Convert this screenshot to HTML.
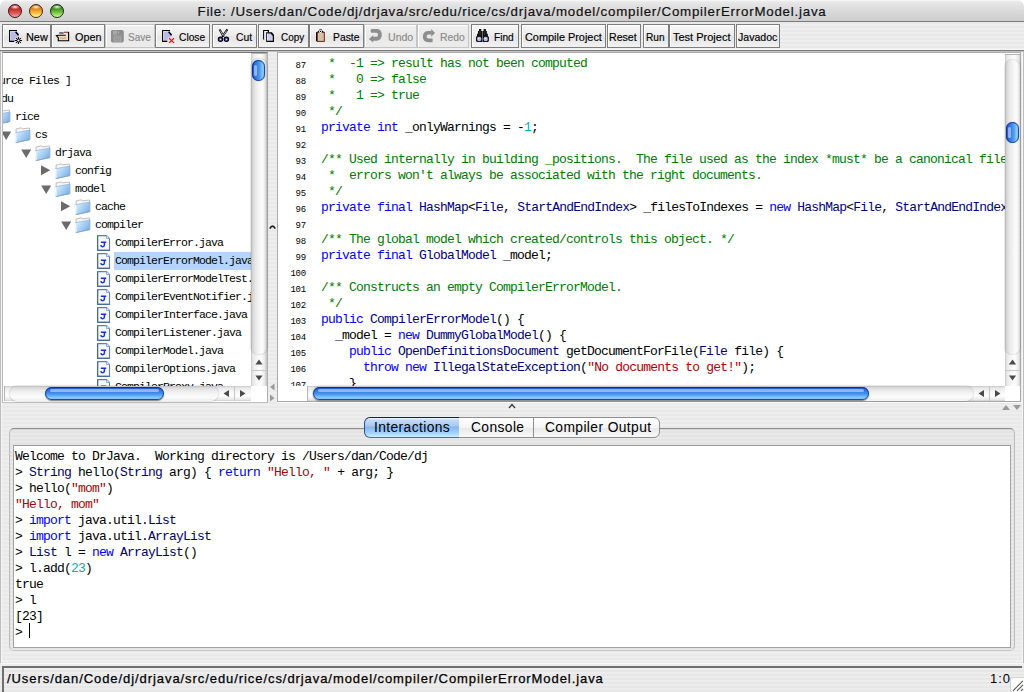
<!DOCTYPE html>
<html><head><meta charset="utf-8">
<style>
*{box-sizing:border-box}
html,body{margin:0;padding:0;background:#fff}
body{width:1024px;height:692px;overflow:hidden;position:relative;font-family:"Liberation Sans",sans-serif}
.abs{position:absolute}
#win{position:absolute;left:0;top:0;width:1024px;height:692px;border-radius:7px 7px 0 0;overflow:hidden;
 background:repeating-linear-gradient(to bottom,#eeeeee 0px,#eeeeee 2px,#e9e9e9 2px,#e9e9e9 4px)}
#title{position:absolute;left:0;top:0;width:1024px;height:22px;background:linear-gradient(to bottom,#f9f9f9 0px,#e8e8e8 2px,#dcdcdc 9px,#cdcdcd 21px);border-bottom:1px solid #7b7b7b}
.light{position:absolute;top:4px;width:14px;height:14px;border-radius:50%;border:1px solid #222}
#ttext{position:absolute;left:0;top:3px;width:1024px;text-align:center;font-size:13.3px;line-height:17px;color:#111;letter-spacing:0.78px;padding-left:0px;-webkit-text-stroke:0.2px #111}
#edgeL{position:absolute;left:0;top:51px;width:1px;height:612px;background:#bdbdbd}
#edgeR{position:absolute;left:1023px;top:51px;width:1px;height:612px;background:#bdbdbd}
.btn{position:absolute;top:24px;height:24px;border:1px solid #7d7d7d;background:linear-gradient(to bottom,#f8f8f8 0%,#ececec 45%,#e4e4e4 55%,#f2f2f2 100%);box-shadow:inset 1px 1px 0 #fff}
.btn.dis{border-color:#c4c4c4;background:linear-gradient(to bottom,#f0f0f0 0%,#e8e8e8 50%,#ececec 100%)}
.tbic{position:absolute;top:26px;width:20px;height:20px}
.tbic svg{display:block}
.btxt{position:absolute;top:30px;font-size:11px;line-height:14px;color:#000;white-space:nowrap;-webkit-text-stroke:0.15px #000}
.distxt{color:#8a8a8a;-webkit-text-stroke:0.15px #8a8a8a}
#tbline{position:absolute;left:0;top:49px;width:1024px;height:3px;background:linear-gradient(to bottom,#f7f7f7 0,#f7f7f7 1px,#7a7a7a 1px,#7a7a7a 2px,#c2c2c2 2px,#c2c2c2 3px)}
.panel{position:absolute;background:#fff;border:1px solid #858585}
.ic{position:absolute}
.tt{position:absolute;font-family:"Liberation Mono",monospace;font-size:11.5px;letter-spacing:-0.9px;line-height:16px;color:#000;white-space:nowrap}
.sel{position:absolute;left:114px;width:140px;height:18px;background:#b5d5ff}
.ln{position:absolute;left:277px;width:29px;text-align:right;font-family:"Liberation Mono",monospace;font-size:9px;letter-spacing:-0.2px;line-height:16px;color:#000;white-space:nowrap}
.cl{position:absolute;left:321px;font-family:"Liberation Mono",monospace;font-size:13px;letter-spacing:-0.8px;line-height:16px;white-space:pre}
.il{position:absolute;left:15px;font-family:"Liberation Mono",monospace;font-size:13px;letter-spacing:-0.8px;line-height:16px;white-space:pre}
.vtrack{position:absolute;background:linear-gradient(to right,#a9a9a9 0px,#cfcfcf 1px,#e6e6e6 4px,#f8f8f8 9px,#fbfbfb 12px,#d9d9d9 15px,#b0b0b0 16px)}
.htrack{position:absolute;background:linear-gradient(to bottom,#b9b9b9 0px,#d3d3d3 1px,#e8e8e8 4px,#f8f8f8 9px,#fbfbfb 12px,#ececec 14px,#fdfdfd 15px)}
.vthumb{position:absolute;border-radius:7px;box-shadow:inset 0 0 0 1px rgba(8,40,140,0.75),0 0 1px rgba(0,0,0,0.55);background:linear-gradient(to right,#1a4cc0 0%,#2f72e0 25%,#4a94ee 55%,#8ad0ff 85%,#5f9ee8 100%)}
.vthumb::after{content:"";position:absolute;left:2px;top:5px;width:3px;bottom:5px;border-radius:2px;background:rgba(220,235,255,0.55)}
.hthumb{position:absolute;border-radius:7px;box-shadow:inset 0 0 0 1px rgba(8,40,140,0.75),0 1px 1px rgba(0,0,0,0.45);background:linear-gradient(to bottom,#1a4cc0 0%,#2f72e0 25%,#4a94ee 55%,#8ad0ff 85%,#5f9ee8 100%)}
.hthumb::after{content:"";position:absolute;top:2px;left:5px;height:3px;right:5px;border-radius:2px;background:rgba(220,235,255,0.55)}
.arrbox{position:absolute;background:linear-gradient(to right,#c9c9c9 0px,#e9e9e9 2px,#f9f9f9 7px,#fdfdfd 10px,#e6e6e6 14px,#c9c9c9 15px)}
.arrboxh{position:absolute;background:linear-gradient(to bottom,#c9c9c9 0px,#e9e9e9 2px,#f9f9f9 7px,#fdfdfd 10px,#e6e6e6 14px,#c9c9c9 15px)}
.tab{position:absolute;top:417px;height:21px;font-size:13.8px;line-height:19px;color:#000;text-align:left;white-space:nowrap;letter-spacing:0.4px}
</style></head><body>
<div id="win">
 <div id="title"></div>
 <div class="light" style="left:8px;border-color:#3d1210;background:radial-gradient(ellipse 42% 20% at 50% 16%,rgba(255,255,255,0.95) 0%,rgba(255,255,255,0) 100%),linear-gradient(to bottom,#9a1a16 0%,#c43030 35%,#dc5a58 68%,#f4a6a2 100%)"></div>
 <div class="light" style="left:29px;border-color:#4a2208;background:radial-gradient(ellipse 42% 20% at 50% 16%,rgba(255,255,255,0.95) 0%,rgba(255,255,255,0) 100%),linear-gradient(to bottom,#a85a0c 0%,#e48c1c 35%,#f6c24a 68%,#ffff96 100%)"></div>
 <div class="light" style="left:50px;border-color:#14300a;background:radial-gradient(ellipse 42% 20% at 50% 16%,rgba(255,255,255,0.95) 0%,rgba(255,255,255,0) 100%),linear-gradient(to bottom,#1e6210 0%,#48981e 35%,#84cc4c 68%,#c6ff96 100%)"></div>
 <div id="ttext">File: /Users/dan/Code/dj/drjava/src/edu/rice/cs/drjava/model/compiler/CompilerErrorModel.java</div>
 <div id="edgeL"></div><div id="edgeR"></div>
 <div class="abs" style="left:1px;top:51px;width:1px;height:612px;background:#f6f6f6"></div><div class="abs" style="left:1022px;top:51px;width:1px;height:612px;background:#f6f6f6"></div>
<div class="btn" style="left:2px;width:49px"></div>
<div class="tbic" style="left:6px"><svg width="20" height="20" viewBox="0 0 20 20"><path d="M4.5 5.5 H10.8 L12.5 8 V11 L9.5 11.5 L8.3 14 V15 H4.5 Z" fill="#babaea"/><path d="M4.4 5.5 V14.8" stroke="#fff" stroke-width="0.9"/><path d="M8.3 15.4 H3.6 V4.5 H11" fill="none" stroke="#000" stroke-width="1.1"/><path d="M9.6 5.8 L12.6 9.3" stroke="#000" stroke-width="1.5"/><g stroke="#000" stroke-width="1.05"><path d="M12.4 10.9 V18.1 M8.8 14.5 H16 M9.9 12 L14.9 17 M14.9 12 L9.9 17"/></g><circle cx="12.4" cy="14.5" r="1.1" fill="#fff"/></svg></div>
<div class="btxt" style="left:25.5px;transform:scaleX(0.99);transform-origin:0 0">New</div>
<div class="btn" style="left:51px;width:54px"></div>
<div class="tbic" style="left:53px"><svg width="20" height="20" viewBox="0 0 20 20"><path d="M6 10 H15.2 V14.3 H6 Z" fill="#efd7b8"/><path d="M7 12.2 Q8 11.4 9 12.2 Q10 13 11 12.2 Q12 11.4 13 12.2" stroke="#b59470" stroke-width="0.8" fill="none"/><path d="M6.2 7 H10.7" stroke="#000" stroke-width="1.1"/><path d="M11 6.3 H15.9" stroke="#8a1e1e" stroke-width="1.1"/><path d="M12.5 7.5 L15 9.5 L15 8 Z" fill="#efd7b8"/><path d="M15.6 6 V14.7 H5.3 V11.8 L3.4 9.7 L5.5 9.2 H12.8" fill="none" stroke="#000" stroke-width="1.15"/></svg></div>
<div class="btxt" style="left:75px;transform:scaleX(0.98);transform-origin:0 0">Open</div>
<div class="btn dis" style="left:105px;width:50px"></div>
<div class="tbic" style="left:107px"><svg width="20" height="20" viewBox="0 0 20 20"><path d="M5 3.9 H15.5 L16.8 5.2 V15.3 L15.5 16.6 H5.2 L4 15.4 V5 Z" fill="#8d8d8d"/><rect x="6" y="4.6" width="4.2" height="4" fill="#a9a9a9"/><rect x="10.2" y="4.6" width="2.6" height="4" fill="#8d8d8d"/><rect x="11" y="5.4" width="1" height="2.2" fill="#b5b5b5"/><rect x="6" y="9.4" width="8.8" height="0.8" fill="#a3a3a3"/><rect x="6.6" y="10.6" width="7.8" height="5" fill="#a7a7a7"/><rect x="7.6" y="11.6" width="5.8" height="3" fill="#9a9a9a"/></svg></div>
<div class="btxt distxt" style="left:128px;transform:scaleX(0.91);transform-origin:0 0">Save</div>
<div class="btn" style="left:155px;width:55px"></div>
<div class="tbic" style="left:159px"><svg width="20" height="20" viewBox="0 0 20 20"><path d="M4.5 5.5 H10.8 L12.5 8 V11 L9.5 11.5 L8.3 14 V15 H4.5 Z" fill="#babaea"/><path d="M4.4 5.5 V14.8" stroke="#fff" stroke-width="0.9"/><path d="M8.3 15.4 H3.6 V4.5 H11" fill="none" stroke="#000" stroke-width="1.1"/><path d="M9.6 5.8 L12.6 9.3" stroke="#000" stroke-width="1.5"/><path d="M10.1 12.2 L15 16.9 M15 12.2 L10.1 16.9" stroke="#f01818" stroke-width="1.3"/></svg></div>
<div class="btxt" style="left:179px;transform:scaleX(0.93);transform-origin:0 0">Close</div>
<div class="btn" style="left:212px;width:45px"></div>
<div class="tbic" style="left:215px"><svg width="20" height="20" viewBox="0 0 20 20"><path d="M4.6 3.4 L8.8 10.8 M12.4 3.4 L7.2 10.8" stroke="#000" stroke-width="2" fill="none"/><path d="M5.2 4.4 L8.2 9.6 M11.8 4.4 L8.3 9.4" stroke="#fff" stroke-width="0.7" fill="none"/><circle cx="5.5" cy="13.3" r="2.2" fill="#5252cc" stroke="#000" stroke-width="1.1"/><circle cx="11.4" cy="13.3" r="2.2" fill="#5252cc" stroke="#000" stroke-width="1.1"/><circle cx="5.5" cy="13.3" r="0.6" fill="#fff"/><circle cx="11.4" cy="13.3" r="0.6" fill="#fff"/></svg></div>
<div class="btxt" style="left:236px;transform:scaleX(0.94);transform-origin:0 0">Cut</div>
<div class="btn" style="left:258px;width:51px"></div>
<div class="tbic" style="left:260px"><svg width="20" height="20" viewBox="0 0 20 20"><path d="M3.7 13.4 V4.5 H8.4 V6.4" fill="none" stroke="#000" stroke-width="1.2"/><rect x="4.4" y="5.2" width="2" height="8" fill="#fff"/><path d="M5.2 6 V12.5" stroke="#c9c9ee" stroke-width="0.8"/><path d="M6.8 6.8 H11.6 L13.4 9 V15.4 H6.8 Z" fill="#cacaf2" stroke="#000" stroke-width="1.2"/><path d="M7.6 7.5 V14.6" stroke="#fff" stroke-width="0.9"/><path d="M11 7.2 L13.6 10" stroke="#000" stroke-width="1.2"/></svg></div>
<div class="btxt" style="left:281px;transform:scaleX(0.9);transform-origin:0 0">Copy</div>
<div class="btn" style="left:309px;width:55px"></div>
<div class="tbic" style="left:312px"><svg width="20" height="20" viewBox="0 0 20 20"><rect x="5.3" y="6.4" width="7" height="9" fill="#d6c2a6" stroke="#6e1f1f" stroke-width="1"/><path d="M4.5 6.2 V15.2" stroke="#000" stroke-width="1"/><path d="M5.3 5.9 L6.8 4.6 H10.2 L11.8 5.9 Z" fill="#000"/><circle cx="8.5" cy="5.4" r="1.5" fill="#fff"/><circle cx="8.5" cy="5.4" r="0.7" fill="#000"/><rect x="7.2" y="2.9" width="2.7" height="1.1" fill="#6d6d6d"/></svg></div>
<div class="btxt" style="left:332.5px;transform:scaleX(0.94);transform-origin:0 0">Paste</div>
<div class="btn dis" style="left:364px;width:53px"></div>
<div class="tbic" style="left:366px"><svg width="20" height="20" viewBox="0 0 20 20"><path d="M5.2 4.95 H10.5 Q13.9 4.95 13.9 8.85 Q13.9 12.75 10.5 12.75 H7" fill="none" stroke="#8e8e8e" stroke-width="3.8"/><path d="M2.9 12.9 L7.2 9.2 L7.2 16.6 Z" fill="#8e8e8e"/><path d="M4 4.8 L6 3.2 V6.4 Z" fill="#8e8e8e"/></svg></div>
<div class="btxt distxt" style="left:388px;transform:scaleX(0.96);transform-origin:0 0">Undo</div>
<div class="btn dis" style="left:417px;width:52px"></div>
<div class="tbic" style="left:419px"><svg width="20" height="20" viewBox="0 0 20 20"><path d="M12.5 6.75 H9.5 Q5.75 6.75 5.75 10.6 Q5.75 14.45 9.5 14.45 H13.6" fill="none" stroke="#8e8e8e" stroke-width="3.7"/><path d="M16 6.9 L12.2 3 L12.2 10.8 Z" fill="#8e8e8e"/></svg></div>
<div class="btxt distxt" style="left:440.4px;transform:scaleX(0.94);transform-origin:0 0">Redo</div>
<div class="btn" style="left:471px;width:48px"></div>
<div class="tbic" style="left:473px"><svg width="20" height="20" viewBox="0 0 20 20"><path d="M6 3 H8.3 V5 H9.3 V15.9 H3.9 L3 15 V11 L4 10 V8 L5 7.5 V5 H6 Z" fill="#111"/><path d="M12.9 3 H10.6 V5 H9.6 V15.9 H15 L15.9 15 V11 L14.9 10 V8 L13.9 7.5 V5 H12.9 Z" fill="#111"/><circle cx="6.2" cy="13" r="2.2" fill="#b9b9f2"/><circle cx="12.7" cy="13" r="2.2" fill="#b9b9f2"/><circle cx="5.6" cy="12.3" r="0.6" fill="#fff"/><circle cx="12.1" cy="12.3" r="0.6" fill="#fff"/><path d="M7 5 V9" stroke="#444" stroke-width="0.8"/><path d="M11.8 5 V9" stroke="#444" stroke-width="0.8"/></svg></div>
<div class="btxt" style="left:494.4px;transform:scaleX(0.92);transform-origin:0 0">Find</div>
<div class="btn" style="left:521px;width:85px"></div>
<div class="btxt" style="left:525px;transform:scaleX(0.99);transform-origin:0 0">Compile Project</div>
<div class="btn" style="left:607px;width:34px"></div>
<div class="btxt" style="left:609.3px;transform:scaleX(0.96);transform-origin:0 0">Reset</div>
<div class="btn" style="left:643px;width:26px"></div>
<div class="btxt" style="left:646.2px;transform:scaleX(0.92);transform-origin:0 0">Run</div>
<div class="btn" style="left:669px;width:66px"></div>
<div class="btxt" style="left:673px;transform:scaleX(1.0);transform-origin:0 0">Test Project</div>
<div class="btn" style="left:736px;width:44px"></div>
<div class="btxt" style="left:737.8px;transform:scaleX(0.96);transform-origin:0 0">Javadoc</div>
 <div id="tbline"></div>

 <!-- left tree panel -->
 <div class="panel" style="left:2px;top:52px;width:266px;height:351px;border-color:#787878 #b0b0b0 #c0c0c0 #b8b8b8"></div>
 <div class="abs" style="left:3px;top:53px;width:248px;height:333px;overflow:hidden">
  <div class="abs" style="left:-3px;top:-53px;width:260px;height:400px">
<div class="tt" style="left:-25px;top:73px">[ Source Files ]</div>
<svg class="ic" style="left:-39px;top:95px" width="11" height="10" viewBox="0 0 11 10"><path d="M0.2 0.5 L10.2 0.5 L5.2 9 Z" fill="#6b6b6b"/></svg>
<svg class="ic" style="left:-26px;top:91px" width="17" height="17" viewBox="0 0 17 17">
<defs><linearGradient id="fgm26_91" x1="0" y1="0" x2="1" y2="0.6"><stop offset="0" stop-color="#eaf6ff"/><stop offset="0.35" stop-color="#bfe0fa"/><stop offset="1" stop-color="#7fb3e6"/></linearGradient></defs>
<path d="M2 2 L7 0.8 L8.5 1.8 L15.5 1 L16 12.5 L2.5 14.5 Z" fill="#f6f6f6" stroke="#a8a8a8" stroke-width="0.7"/>
<path d="M1.2 5.8 L16 3 L15.6 12.6 L1.8 15.6 Z" fill="url(#fgm26_91)" stroke="#8aa9c9" stroke-width="0.6"/>
<path d="M1.5 6 L2 15.3" stroke="#ffffff" stroke-width="1.2"/>
<path d="M2.2 15.6 L15.6 12.6" stroke="#7d9fc4" stroke-width="0.8"/>
</svg>
<div class="tt" style="left:-5px;top:91px">edu</div>
<svg class="ic" style="left:-19px;top:113px" width="11" height="10" viewBox="0 0 11 10"><path d="M0.2 0.5 L10.2 0.5 L5.2 9 Z" fill="#6b6b6b"/></svg>
<svg class="ic" style="left:-6px;top:109px" width="17" height="17" viewBox="0 0 17 17">
<defs><linearGradient id="fgm6_109" x1="0" y1="0" x2="1" y2="0.6"><stop offset="0" stop-color="#eaf6ff"/><stop offset="0.35" stop-color="#bfe0fa"/><stop offset="1" stop-color="#7fb3e6"/></linearGradient></defs>
<path d="M2 2 L7 0.8 L8.5 1.8 L15.5 1 L16 12.5 L2.5 14.5 Z" fill="#f6f6f6" stroke="#a8a8a8" stroke-width="0.7"/>
<path d="M1.2 5.8 L16 3 L15.6 12.6 L1.8 15.6 Z" fill="url(#fgm6_109)" stroke="#8aa9c9" stroke-width="0.6"/>
<path d="M1.5 6 L2 15.3" stroke="#ffffff" stroke-width="1.2"/>
<path d="M2.2 15.6 L15.6 12.6" stroke="#7d9fc4" stroke-width="0.8"/>
</svg>
<div class="tt" style="left:15px;top:109px">rice</div>
<svg class="ic" style="left:1px;top:131px" width="11" height="10" viewBox="0 0 11 10"><path d="M0.2 0.5 L10.2 0.5 L5.2 9 Z" fill="#6b6b6b"/></svg>
<svg class="ic" style="left:14px;top:127px" width="17" height="17" viewBox="0 0 17 17">
<defs><linearGradient id="fg14_127" x1="0" y1="0" x2="1" y2="0.6"><stop offset="0" stop-color="#eaf6ff"/><stop offset="0.35" stop-color="#bfe0fa"/><stop offset="1" stop-color="#7fb3e6"/></linearGradient></defs>
<path d="M2 2 L7 0.8 L8.5 1.8 L15.5 1 L16 12.5 L2.5 14.5 Z" fill="#f6f6f6" stroke="#a8a8a8" stroke-width="0.7"/>
<path d="M1.2 5.8 L16 3 L15.6 12.6 L1.8 15.6 Z" fill="url(#fg14_127)" stroke="#8aa9c9" stroke-width="0.6"/>
<path d="M1.5 6 L2 15.3" stroke="#ffffff" stroke-width="1.2"/>
<path d="M2.2 15.6 L15.6 12.6" stroke="#7d9fc4" stroke-width="0.8"/>
</svg>
<div class="tt" style="left:35px;top:127px">cs</div>
<svg class="ic" style="left:21px;top:149px" width="11" height="10" viewBox="0 0 11 10"><path d="M0.2 0.5 L10.2 0.5 L5.2 9 Z" fill="#6b6b6b"/></svg>
<svg class="ic" style="left:34px;top:145px" width="17" height="17" viewBox="0 0 17 17">
<defs><linearGradient id="fg34_145" x1="0" y1="0" x2="1" y2="0.6"><stop offset="0" stop-color="#eaf6ff"/><stop offset="0.35" stop-color="#bfe0fa"/><stop offset="1" stop-color="#7fb3e6"/></linearGradient></defs>
<path d="M2 2 L7 0.8 L8.5 1.8 L15.5 1 L16 12.5 L2.5 14.5 Z" fill="#f6f6f6" stroke="#a8a8a8" stroke-width="0.7"/>
<path d="M1.2 5.8 L16 3 L15.6 12.6 L1.8 15.6 Z" fill="url(#fg34_145)" stroke="#8aa9c9" stroke-width="0.6"/>
<path d="M1.5 6 L2 15.3" stroke="#ffffff" stroke-width="1.2"/>
<path d="M2.2 15.6 L15.6 12.6" stroke="#7d9fc4" stroke-width="0.8"/>
</svg>
<div class="tt" style="left:55px;top:145px">drjava</div>
<svg class="ic" style="left:41px;top:165px" width="10" height="11" viewBox="0 0 10 11"><path d="M0 0.3 L9.3 5.3 L0 10.3 Z" fill="#6b6b6b"/></svg>
<svg class="ic" style="left:54px;top:163px" width="17" height="17" viewBox="0 0 17 17">
<defs><linearGradient id="fg54_163" x1="0" y1="0" x2="1" y2="0.6"><stop offset="0" stop-color="#eaf6ff"/><stop offset="0.35" stop-color="#bfe0fa"/><stop offset="1" stop-color="#7fb3e6"/></linearGradient></defs>
<path d="M2 2 L7 0.8 L8.5 1.8 L15.5 1 L16 12.5 L2.5 14.5 Z" fill="#f6f6f6" stroke="#a8a8a8" stroke-width="0.7"/>
<path d="M1.2 5.8 L16 3 L15.6 12.6 L1.8 15.6 Z" fill="url(#fg54_163)" stroke="#8aa9c9" stroke-width="0.6"/>
<path d="M1.5 6 L2 15.3" stroke="#ffffff" stroke-width="1.2"/>
<path d="M2.2 15.6 L15.6 12.6" stroke="#7d9fc4" stroke-width="0.8"/>
</svg>
<div class="tt" style="left:75px;top:163px">config</div>
<svg class="ic" style="left:41px;top:185px" width="11" height="10" viewBox="0 0 11 10"><path d="M0.2 0.5 L10.2 0.5 L5.2 9 Z" fill="#6b6b6b"/></svg>
<svg class="ic" style="left:54px;top:181px" width="17" height="17" viewBox="0 0 17 17">
<defs><linearGradient id="fg54_181" x1="0" y1="0" x2="1" y2="0.6"><stop offset="0" stop-color="#eaf6ff"/><stop offset="0.35" stop-color="#bfe0fa"/><stop offset="1" stop-color="#7fb3e6"/></linearGradient></defs>
<path d="M2 2 L7 0.8 L8.5 1.8 L15.5 1 L16 12.5 L2.5 14.5 Z" fill="#f6f6f6" stroke="#a8a8a8" stroke-width="0.7"/>
<path d="M1.2 5.8 L16 3 L15.6 12.6 L1.8 15.6 Z" fill="url(#fg54_181)" stroke="#8aa9c9" stroke-width="0.6"/>
<path d="M1.5 6 L2 15.3" stroke="#ffffff" stroke-width="1.2"/>
<path d="M2.2 15.6 L15.6 12.6" stroke="#7d9fc4" stroke-width="0.8"/>
</svg>
<div class="tt" style="left:75px;top:181px">model</div>
<svg class="ic" style="left:61px;top:201px" width="10" height="11" viewBox="0 0 10 11"><path d="M0 0.3 L9.3 5.3 L0 10.3 Z" fill="#6b6b6b"/></svg>
<svg class="ic" style="left:74px;top:199px" width="17" height="17" viewBox="0 0 17 17">
<defs><linearGradient id="fg74_199" x1="0" y1="0" x2="1" y2="0.6"><stop offset="0" stop-color="#eaf6ff"/><stop offset="0.35" stop-color="#bfe0fa"/><stop offset="1" stop-color="#7fb3e6"/></linearGradient></defs>
<path d="M2 2 L7 0.8 L8.5 1.8 L15.5 1 L16 12.5 L2.5 14.5 Z" fill="#f6f6f6" stroke="#a8a8a8" stroke-width="0.7"/>
<path d="M1.2 5.8 L16 3 L15.6 12.6 L1.8 15.6 Z" fill="url(#fg74_199)" stroke="#8aa9c9" stroke-width="0.6"/>
<path d="M1.5 6 L2 15.3" stroke="#ffffff" stroke-width="1.2"/>
<path d="M2.2 15.6 L15.6 12.6" stroke="#7d9fc4" stroke-width="0.8"/>
</svg>
<div class="tt" style="left:95px;top:199px">cache</div>
<svg class="ic" style="left:61px;top:221px" width="11" height="10" viewBox="0 0 11 10"><path d="M0.2 0.5 L10.2 0.5 L5.2 9 Z" fill="#6b6b6b"/></svg>
<svg class="ic" style="left:74px;top:217px" width="17" height="17" viewBox="0 0 17 17">
<defs><linearGradient id="fg74_217" x1="0" y1="0" x2="1" y2="0.6"><stop offset="0" stop-color="#eaf6ff"/><stop offset="0.35" stop-color="#bfe0fa"/><stop offset="1" stop-color="#7fb3e6"/></linearGradient></defs>
<path d="M2 2 L7 0.8 L8.5 1.8 L15.5 1 L16 12.5 L2.5 14.5 Z" fill="#f6f6f6" stroke="#a8a8a8" stroke-width="0.7"/>
<path d="M1.2 5.8 L16 3 L15.6 12.6 L1.8 15.6 Z" fill="url(#fg74_217)" stroke="#8aa9c9" stroke-width="0.6"/>
<path d="M1.5 6 L2 15.3" stroke="#ffffff" stroke-width="1.2"/>
<path d="M2.2 15.6 L15.6 12.6" stroke="#7d9fc4" stroke-width="0.8"/>
</svg>
<div class="tt" style="left:95px;top:217px">compiler</div>
<svg class="ic" style="left:97px;top:235px" width="14" height="16" viewBox="0 0 14 16">
<path d="M0.6 0.6 H9.5 L12.5 3.6 V15.4 H0.6 Z" fill="#f7f9fc" stroke="#5f7fa8" stroke-width="1.1"/><path d="M1 15.4 H12.5 M0.6 1 V15.4" stroke="#4a6a98" stroke-width="1.2"/>
<path d="M9.5 0.5 V3.5 H12.5" fill="#dfe8f3" stroke="#7f9fc5" stroke-width="0.8"/>
<path d="M3.9 7.2 H9.2 M7.4 7.2 V10.1 Q7.4 11.7 5.6 11.7 Q3.9 11.7 3.9 10.1" fill="none" stroke="#1a2ee0" stroke-width="1.45"/>
</svg>
<div class="tt" style="left:115px;top:235px">CompilerError.java</div>
<div class="sel" style="top:252px"></div>
<svg class="ic" style="left:97px;top:253px" width="14" height="16" viewBox="0 0 14 16">
<path d="M0.6 0.6 H9.5 L12.5 3.6 V15.4 H0.6 Z" fill="#f7f9fc" stroke="#5f7fa8" stroke-width="1.1"/><path d="M1 15.4 H12.5 M0.6 1 V15.4" stroke="#4a6a98" stroke-width="1.2"/>
<path d="M9.5 0.5 V3.5 H12.5" fill="#dfe8f3" stroke="#7f9fc5" stroke-width="0.8"/>
<path d="M3.9 7.2 H9.2 M7.4 7.2 V10.1 Q7.4 11.7 5.6 11.7 Q3.9 11.7 3.9 10.1" fill="none" stroke="#1a2ee0" stroke-width="1.45"/>
</svg>
<div class="tt" style="left:115px;top:253px">CompilerErrorModel.java</div>
<svg class="ic" style="left:97px;top:271px" width="14" height="16" viewBox="0 0 14 16">
<path d="M0.6 0.6 H9.5 L12.5 3.6 V15.4 H0.6 Z" fill="#f7f9fc" stroke="#5f7fa8" stroke-width="1.1"/><path d="M1 15.4 H12.5 M0.6 1 V15.4" stroke="#4a6a98" stroke-width="1.2"/>
<path d="M9.5 0.5 V3.5 H12.5" fill="#dfe8f3" stroke="#7f9fc5" stroke-width="0.8"/>
<path d="M3.9 7.2 H9.2 M7.4 7.2 V10.1 Q7.4 11.7 5.6 11.7 Q3.9 11.7 3.9 10.1" fill="none" stroke="#1a2ee0" stroke-width="1.45"/>
</svg>
<div class="tt" style="left:115px;top:271px">CompilerErrorModelTest.java</div>
<svg class="ic" style="left:97px;top:289px" width="14" height="16" viewBox="0 0 14 16">
<path d="M0.6 0.6 H9.5 L12.5 3.6 V15.4 H0.6 Z" fill="#f7f9fc" stroke="#5f7fa8" stroke-width="1.1"/><path d="M1 15.4 H12.5 M0.6 1 V15.4" stroke="#4a6a98" stroke-width="1.2"/>
<path d="M9.5 0.5 V3.5 H12.5" fill="#dfe8f3" stroke="#7f9fc5" stroke-width="0.8"/>
<path d="M3.9 7.2 H9.2 M7.4 7.2 V10.1 Q7.4 11.7 5.6 11.7 Q3.9 11.7 3.9 10.1" fill="none" stroke="#1a2ee0" stroke-width="1.45"/>
</svg>
<div class="tt" style="left:115px;top:289px">CompilerEventNotifier.java</div>
<svg class="ic" style="left:97px;top:307px" width="14" height="16" viewBox="0 0 14 16">
<path d="M0.6 0.6 H9.5 L12.5 3.6 V15.4 H0.6 Z" fill="#f7f9fc" stroke="#5f7fa8" stroke-width="1.1"/><path d="M1 15.4 H12.5 M0.6 1 V15.4" stroke="#4a6a98" stroke-width="1.2"/>
<path d="M9.5 0.5 V3.5 H12.5" fill="#dfe8f3" stroke="#7f9fc5" stroke-width="0.8"/>
<path d="M3.9 7.2 H9.2 M7.4 7.2 V10.1 Q7.4 11.7 5.6 11.7 Q3.9 11.7 3.9 10.1" fill="none" stroke="#1a2ee0" stroke-width="1.45"/>
</svg>
<div class="tt" style="left:115px;top:307px">CompilerInterface.java</div>
<svg class="ic" style="left:97px;top:325px" width="14" height="16" viewBox="0 0 14 16">
<path d="M0.6 0.6 H9.5 L12.5 3.6 V15.4 H0.6 Z" fill="#f7f9fc" stroke="#5f7fa8" stroke-width="1.1"/><path d="M1 15.4 H12.5 M0.6 1 V15.4" stroke="#4a6a98" stroke-width="1.2"/>
<path d="M9.5 0.5 V3.5 H12.5" fill="#dfe8f3" stroke="#7f9fc5" stroke-width="0.8"/>
<path d="M3.9 7.2 H9.2 M7.4 7.2 V10.1 Q7.4 11.7 5.6 11.7 Q3.9 11.7 3.9 10.1" fill="none" stroke="#1a2ee0" stroke-width="1.45"/>
</svg>
<div class="tt" style="left:115px;top:325px">CompilerListener.java</div>
<svg class="ic" style="left:97px;top:343px" width="14" height="16" viewBox="0 0 14 16">
<path d="M0.6 0.6 H9.5 L12.5 3.6 V15.4 H0.6 Z" fill="#f7f9fc" stroke="#5f7fa8" stroke-width="1.1"/><path d="M1 15.4 H12.5 M0.6 1 V15.4" stroke="#4a6a98" stroke-width="1.2"/>
<path d="M9.5 0.5 V3.5 H12.5" fill="#dfe8f3" stroke="#7f9fc5" stroke-width="0.8"/>
<path d="M3.9 7.2 H9.2 M7.4 7.2 V10.1 Q7.4 11.7 5.6 11.7 Q3.9 11.7 3.9 10.1" fill="none" stroke="#1a2ee0" stroke-width="1.45"/>
</svg>
<div class="tt" style="left:115px;top:343px">CompilerModel.java</div>
<svg class="ic" style="left:97px;top:361px" width="14" height="16" viewBox="0 0 14 16">
<path d="M0.6 0.6 H9.5 L12.5 3.6 V15.4 H0.6 Z" fill="#f7f9fc" stroke="#5f7fa8" stroke-width="1.1"/><path d="M1 15.4 H12.5 M0.6 1 V15.4" stroke="#4a6a98" stroke-width="1.2"/>
<path d="M9.5 0.5 V3.5 H12.5" fill="#dfe8f3" stroke="#7f9fc5" stroke-width="0.8"/>
<path d="M3.9 7.2 H9.2 M7.4 7.2 V10.1 Q7.4 11.7 5.6 11.7 Q3.9 11.7 3.9 10.1" fill="none" stroke="#1a2ee0" stroke-width="1.45"/>
</svg>
<div class="tt" style="left:115px;top:361px">CompilerOptions.java</div>
<svg class="ic" style="left:97px;top:379px" width="14" height="16" viewBox="0 0 14 16">
<path d="M0.6 0.6 H9.5 L12.5 3.6 V15.4 H0.6 Z" fill="#f7f9fc" stroke="#5f7fa8" stroke-width="1.1"/><path d="M1 15.4 H12.5 M0.6 1 V15.4" stroke="#4a6a98" stroke-width="1.2"/>
<path d="M9.5 0.5 V3.5 H12.5" fill="#dfe8f3" stroke="#7f9fc5" stroke-width="0.8"/>
<path d="M3.9 7.2 H9.2 M7.4 7.2 V10.1 Q7.4 11.7 5.6 11.7 Q3.9 11.7 3.9 10.1" fill="none" stroke="#1a2ee0" stroke-width="1.45"/>
</svg>
<div class="tt" style="left:115px;top:379px">CompilerProxy.java</div>
  </div>
 </div>
<div class="arrbox" style="left:251px;top:53px;width:16px;height:333px;border-top:1px solid #b4b4b4"></div>
<div class="vtrack" style="left:251px;top:59px;width:16px;height:295px;border-radius:7px;box-shadow:0 0 1.5px rgba(0,0,0,0.45)"></div>
<div class="vthumb" style="left:252px;top:60px;width:13px;height:21px"></div>
<div class="abs" style="left:251px;top:370px;width:16px;height:1px;background:#c6c6c6"></div>
<svg class="ic" style="left:251px;top:354px" width="16" height="32"><path d="M4.4 10.5 L11.6 10.5 L8.0 5.5 Z M4.4 21.5 L11.6 21.5 L8.0 26.5 Z" fill="#4a4a4a"/></svg>
<div class="arrboxh" style="left:4px;top:386px;width:247px;height:15px;border-left:1px solid #b4b4b4"></div>
<div class="htrack" style="left:10px;top:386px;width:208px;height:15px;border-radius:7px;box-shadow:0 0 1.5px rgba(0,0,0,0.45)"></div>
<div class="hthumb" style="left:45px;top:387px;width:119px;height:13px"></div>
<div class="abs" style="left:234px;top:386px;width:1px;height:15px;background:#c6c6c6"></div>
<svg class="ic" style="left:218px;top:386px" width="33" height="15"><path d="M11 3.9 L11 11.1 L5.5 7.5 Z M22 3.9 L22 11.1 L27.5 7.5 Z" fill="#4a4a4a"/></svg>
 <svg class="ic" style="left:269px;top:383px" width="7" height="20"><path d="M5.5 0.5 L1 4 L5.5 7.5 Z M1 11.5 L5.5 15 L1 18.5 Z" fill="#9a9a9a"/></svg>

 <!-- code panel -->
 <div class="panel" style="left:277px;top:52px;width:744px;height:350px;border-color:#b0b0b0 #aaaaaa #a8a8a8 #aaaaaa"></div>
 <div class="abs" style="left:278px;top:53px;width:727px;height:333px;overflow:hidden">
  <div class="abs" style="left:-278px;top:-53px;width:1100px;height:400px">
<div class="ln" style="top:58px">87</div>
<div class="cl" style="top:56px"><span style="color:#007c00"> *  -1 =&gt; result has not been computed</span></div>
<div class="ln" style="top:74px">88</div>
<div class="cl" style="top:72px"><span style="color:#007c00"> *   0 =&gt; false</span></div>
<div class="ln" style="top:90px">89</div>
<div class="cl" style="top:88px"><span style="color:#007c00"> *   1 =&gt; true</span></div>
<div class="ln" style="top:106px">90</div>
<div class="cl" style="top:104px"><span style="color:#007c00"> */</span></div>
<div class="ln" style="top:122px">91</div>
<div class="cl" style="top:120px"><span style="color:#0000ff">private</span><span style="color:#000000"> </span><span style="color:#0000ff">int</span><span style="color:#000000"> _onlyWarnings = -</span><span style="color:#00b2b2">1</span><span style="color:#000000">;</span></div>
<div class="ln" style="top:138px">92</div>
<div class="cl" style="top:136px"></div>
<div class="ln" style="top:154px">93</div>
<div class="cl" style="top:152px"><span style="color:#007c00">/** Used internally in building _positions.  The file used as the index *must* be a canonical file</span></div>
<div class="ln" style="top:170px">94</div>
<div class="cl" style="top:168px"><span style="color:#007c00"> *  errors won&#x27;t always be associated with the right documents.</span></div>
<div class="ln" style="top:186px">95</div>
<div class="cl" style="top:184px"><span style="color:#007c00"> */</span></div>
<div class="ln" style="top:202px">96</div>
<div class="cl" style="top:200px"><span style="color:#0000ff">private</span><span style="color:#000000"> </span><span style="color:#0000ff">final</span><span style="color:#000000"> </span><span style="color:#00007c">HashMap</span><span style="color:#000000">&lt;</span><span style="color:#00007c">File</span><span style="color:#000000">, </span><span style="color:#00007c">StartAndEndIndex</span><span style="color:#000000">&gt; _filesToIndexes = </span><span style="color:#0000ff">new</span><span style="color:#000000"> </span><span style="color:#00007c">HashMap</span><span style="color:#000000">&lt;</span><span style="color:#00007c">File</span><span style="color:#000000">, </span><span style="color:#00007c">StartAndEndIndex</span><span style="color:#000000">&gt;();</span></div>
<div class="ln" style="top:218px">97</div>
<div class="cl" style="top:216px"></div>
<div class="ln" style="top:234px">98</div>
<div class="cl" style="top:232px"><span style="color:#007c00">/** The global model which created/controls this object. */</span></div>
<div class="ln" style="top:250px">99</div>
<div class="cl" style="top:248px"><span style="color:#0000ff">private</span><span style="color:#000000"> </span><span style="color:#0000ff">final</span><span style="color:#000000"> </span><span style="color:#00007c">GlobalModel</span><span style="color:#000000"> _model;</span></div>
<div class="ln" style="top:266px">100</div>
<div class="cl" style="top:264px"></div>
<div class="ln" style="top:282px">101</div>
<div class="cl" style="top:280px"><span style="color:#007c00">/** Constructs an empty CompilerErrorModel.</span></div>
<div class="ln" style="top:298px">102</div>
<div class="cl" style="top:296px"><span style="color:#007c00"> */</span></div>
<div class="ln" style="top:314px">103</div>
<div class="cl" style="top:312px"><span style="color:#0000ff">public</span><span style="color:#000000"> </span><span style="color:#00007c">CompilerErrorModel</span><span style="color:#000000">() {</span></div>
<div class="ln" style="top:330px">104</div>
<div class="cl" style="top:328px"><span style="color:#000000">  _model = </span><span style="color:#0000ff">new</span><span style="color:#000000"> </span><span style="color:#00007c">DummyGlobalModel</span><span style="color:#000000">() {</span></div>
<div class="ln" style="top:346px">105</div>
<div class="cl" style="top:344px"><span style="color:#000000">    </span><span style="color:#0000ff">public</span><span style="color:#000000"> </span><span style="color:#00007c">OpenDefinitionsDocument</span><span style="color:#000000"> getDocumentForFile(</span><span style="color:#00007c">File</span><span style="color:#000000"> file) {</span></div>
<div class="ln" style="top:362px">106</div>
<div class="cl" style="top:360px"><span style="color:#000000">      </span><span style="color:#0000ff">throw</span><span style="color:#000000"> </span><span style="color:#0000ff">new</span><span style="color:#000000"> </span><span style="color:#00007c">IllegalStateException</span><span style="color:#000000">(</span><span style="color:#b20000">&quot;No documents to get!&quot;</span><span style="color:#000000">);</span></div>
<div class="ln" style="top:378px">107</div>
<div class="cl" style="top:376px"><span style="color:#000000">    }</span></div>
  </div>
 </div>
<div class="arrbox" style="left:1005px;top:54px;width:15px;height:332px;border-top:1px solid #b4b4b4"></div>
<div class="vtrack" style="left:1005px;top:60px;width:15px;height:294px;border-radius:7px;box-shadow:0 0 1.5px rgba(0,0,0,0.45)"></div>
<div class="vthumb" style="left:1006px;top:122px;width:13px;height:21px"></div>
<div class="abs" style="left:1005px;top:370px;width:15px;height:1px;background:#c6c6c6"></div>
<svg class="ic" style="left:1005px;top:354px" width="15" height="32"><path d="M3.9 10.5 L11.1 10.5 L7.5 5.5 Z M3.9 21.5 L11.1 21.5 L7.5 26.5 Z" fill="#4a4a4a"/></svg>
<div class="arrboxh" style="left:307px;top:386px;width:698px;height:15px;border-left:1px solid #b4b4b4"></div>
<div class="htrack" style="left:313px;top:386px;width:660px;height:15px;border-radius:7px;box-shadow:0 0 1.5px rgba(0,0,0,0.45)"></div>
<div class="hthumb" style="left:313px;top:387px;width:556px;height:13px"></div>
<div class="abs" style="left:989px;top:386px;width:1px;height:15px;background:#c6c6c6"></div>
<svg class="ic" style="left:973px;top:386px" width="32" height="15"><path d="M11 3.9 L11 11.1 L5.5 7.5 Z M22 3.9 L22 11.1 L27.5 7.5 Z" fill="#4a4a4a"/></svg>

 <div class="abs" style="left:277px;top:402px;width:745px;height:1px;background:#fbfbfb"></div>
 <!-- splitter arrows -->
 <svg class="ic" style="left:269px;top:224px" width="7" height="6"><path d="M0.8 4.6 Q3.5 -0.2 6.2 4.6" fill="none" stroke="#222" stroke-width="1.7"/></svg>
 <svg class="ic" style="left:508px;top:403px" width="8" height="6"><path d="M1 5 L4 1.5 L7 5" fill="none" stroke="#333" stroke-width="1.2"/></svg>
 <svg class="ic" style="left:1001px;top:404px" width="22" height="7"><path d="M1 6 L5 1 L9 6 Z M12 1 L20 1 L16 6 Z" fill="#9a9a9a"/></svg>

 <!-- tab pane -->
 <div class="abs" style="left:9px;top:428px;width:1006px;height:223px;border:1px solid #bcbcbc;border-top-color:#8e8e8e;border-bottom-color:#c8c8c8;box-shadow:inset 0 1px 1px rgba(0,0,0,0.08);border-radius:5px;background:repeating-linear-gradient(to bottom,#e9e9e9 0px,#e9e9e9 2px,#e3e3e3 2px,#e3e3e3 4px)"></div>
 <div class="abs" style="left:13px;top:445px;width:998px;height:203px;background:#fff;border:1px solid #a3a3a3;border-top-color:#9a9a9a"></div>
 <div class="tab" style="left:364px;width:96px;border:1px solid #2a4cae;border-top-color:#0e168a;border-bottom-color:#5a6a88;border-radius:6px 0 0 6px;background:linear-gradient(to bottom,#f4f8ff 0px,#c4dbf6 2px,#a8c8f0 8px,#86b6ec 9px,#9ccdfa 14px,#c6efff 19px)"><span style="position:absolute;left:9px">Interactions</span></div>
 <div class="tab" style="left:459px;width:75px;border:1px solid #8e8e8e;border-left:none;background:linear-gradient(to bottom,#ffffff 0%,#f4f4f4 50%,#e9e9e9 55%,#f9f9f9 100%)"><span style="position:absolute;left:12px">Console</span></div>
 <div class="tab" style="left:533px;width:127px;border:1px solid #8e8e8e;border-radius:0 6px 6px 0;background:linear-gradient(to bottom,#ffffff 0%,#f4f4f4 50%,#e9e9e9 55%,#f9f9f9 100%)"><span style="position:absolute;left:11px">Compiler Output</span></div>
<div class="il" style="top:449px"><span style="color:#000000">Welcome to DrJava.  Working directory is /Users/dan/Code/dj</span></div>
<div class="il" style="top:465px"><span style="color:#000000">&gt; </span><span style="color:#00007c">String</span><span style="color:#000000"> hello(</span><span style="color:#00007c">String</span><span style="color:#000000"> arg) { </span><span style="color:#0000ff">return</span><span style="color:#000000"> </span><span style="color:#b20000">&quot;Hello, &quot;</span><span style="color:#000000"> + arg; }</span></div>
<div class="il" style="top:481px"><span style="color:#000000">&gt; hello(</span><span style="color:#b20000">&quot;mom&quot;</span><span style="color:#000000">)</span></div>
<div class="il" style="top:497px"><span style="color:#b20000">&quot;Hello, mom&quot;</span></div>
<div class="il" style="top:513px"><span style="color:#000000">&gt; </span><span style="color:#0000ff">import</span><span style="color:#000000"> java.util.</span><span style="color:#00007c">List</span></div>
<div class="il" style="top:529px"><span style="color:#000000">&gt; </span><span style="color:#0000ff">import</span><span style="color:#000000"> java.util.</span><span style="color:#00007c">ArrayList</span></div>
<div class="il" style="top:545px"><span style="color:#000000">&gt; </span><span style="color:#00007c">List</span><span style="color:#000000"> l = </span><span style="color:#0000ff">new</span><span style="color:#000000"> </span><span style="color:#00007c">ArrayList</span><span style="color:#000000">()</span></div>
<div class="il" style="top:561px"><span style="color:#000000">&gt; l.add(</span><span style="color:#00b2b2">23</span><span style="color:#000000">)</span></div>
<div class="il" style="top:577px"><span style="color:#000000">true</span></div>
<div class="il" style="top:593px"><span style="color:#000000">&gt; l</span></div>
<div class="il" style="top:609px"><span style="color:#000000">[23]</span></div>
<div class="il" style="top:625px"><span style="color:#000000">&gt; </span></div>
 <div class="abs" style="left:29px;top:623px;width:1px;height:15px;background:#000"></div>

 <!-- status bar -->
 <div class="abs" style="left:0;top:663px;width:1024px;height:1px;background:#f9f9f9"></div>
 <div class="abs" style="left:0;top:664px;width:1024px;height:28px;background:repeating-linear-gradient(to bottom,#ededed 0px,#ededed 2px,#e7e7e7 2px,#e7e7e7 4px)"></div>
 <div class="abs" style="left:2px;top:666px;width:1020px;height:26px;border-top:2px solid #6f6f6f;border-left:2px solid #6f6f6f"></div>
 <div class="abs" style="left:7px;top:670px;font-size:13px;line-height:17px;color:#000;white-space:nowrap;letter-spacing:0.93px;-webkit-text-stroke:0.25px #000">/Users/dan/Code/dj/drjava/src/edu/rice/cs/drjava/model/compiler/CompilerErrorModel.java</div>
 <div class="abs" style="left:990px;top:670px;font-size:13px;line-height:17px;color:#000;white-space:nowrap;letter-spacing:0.9px">1:0</div>
 <svg class="ic" style="left:1010px;top:677px" width="14" height="15"><rect x="0" y="0" width="14" height="15" fill="#fbfbfb"/><path d="M0.5 15 V0.5 H14" stroke="#d2d2d2" stroke-width="1" fill="none"/><path d="M2.9 13.8 L12.9 3.8 M7 13.8 L13 7.8 M11 13.8 L13 11.8" stroke="#5a5a5a" stroke-width="1.1"/></svg>
</div>
</body></html>
